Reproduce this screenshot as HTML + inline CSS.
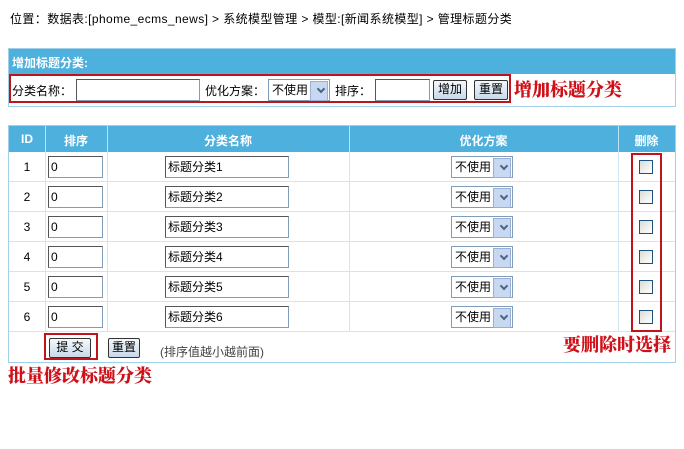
<!DOCTYPE html><html><head><meta charset="utf-8"><style>
*{margin:0;padding:0;box-sizing:border-box}
body{width:684px;height:449px;background:#fff;font:12px "Liberation Sans","Noto Sans CJK SC",sans-serif;color:#000;position:relative;overflow:hidden}
.a{position:absolute}
.hd{background:#4eb0dc;color:#fff;font-weight:bold}
.inp{position:absolute;background:#fff;border:1px solid #7f9db9;border-top-color:#555;border-left-color:#555;height:22px;font-size:12px;padding:3px 2px;line-height:14px}
.sel{position:absolute;border:1px solid #7f9db9;background:#fff;height:22px;width:62px;font-size:12px;padding:3px 3px;line-height:14px}
.sel:after{content:"";position:absolute;right:1px;top:1px;width:16px;height:18px;background:#c8d8f0;border:1px solid #98b0d8}
.sel i{position:absolute;right:5px;top:6px;width:6px;height:6px;border-right:2px solid #4d6185;border-bottom:2px solid #4d6185;transform:rotate(45deg);z-index:2}
.btn{position:absolute;height:20px;border:1px solid #333;background:linear-gradient(#f4f8fc,#c8d8e8);font-size:12px;text-align:center;line-height:17px;border-radius:2px}
.cb{position:absolute;width:14px;height:14px;border:1px solid #1c5180;background:linear-gradient(135deg,#dcdcd6,#fff)}
.red{position:absolute;border:2px solid #c0141c}
.rt{position:absolute;color:#d01018;font-weight:900;font-family:"Noto Serif CJK SC",serif;font-size:18px;line-height:20px}
.bd{border:1px solid #9fd0e8}
.line{position:absolute;background:#cfe6f2}
.c{position:absolute;text-align:center}
</style></head><body>
<div class="a" style="left:10px;top:10px;letter-spacing:0.4px">位置：数据表:[phome_ecms_news] &gt; 系统模型管理 &gt; 模型:[新闻系统模型] &gt; 管理标题分类</div>

<div class="a bd" style="left:8px;top:48px;width:668px;height:59px"></div>
<div class="a hd" style="left:9px;top:49px;width:666px;height:25px;padding:5px 3px">增加标题分类:</div>
<div class="a" style="left:12px;top:82px">分类名称：</div>
<div class="inp" style="left:76px;top:79px;width:124px"></div>
<div class="a" style="left:205px;top:82px">优化方案：</div>
<div class="sel" style="left:268px;top:79px">不使用<i></i></div>
<div class="a" style="left:335px;top:82px">排序：</div>
<div class="inp" style="left:375px;top:79px;width:55px"></div>
<div class="btn" style="left:433px;top:80px;width:34px">增加</div>
<div class="btn" style="left:474px;top:80px;width:34px">重置</div>
<div class="red" style="left:9px;top:74px;width:502px;height:29px"></div>
<div class="rt" style="left:514px;top:79px">增加标题分类</div>

<div class="a bd" style="left:8px;top:125px;width:668px;height:238px"></div>
<div class="a hd" style="left:9px;top:126px;width:666px;height:26px"></div>
<div class="a" style="left:45px;top:126px;width:1px;height:26px;background:#bfe2f2"></div>
<div class="a" style="left:107px;top:126px;width:1px;height:26px;background:#bfe2f2"></div>
<div class="a" style="left:349px;top:126px;width:1px;height:26px;background:#bfe2f2"></div>
<div class="a" style="left:618px;top:126px;width:1px;height:26px;background:#bfe2f2"></div>
<div class="c hd" style="left:9px;top:132px;width:36px;background:none">ID</div>
<div class="c hd" style="left:45px;top:132px;width:62px;background:none">排序</div>
<div class="c hd" style="left:107px;top:132px;width:242px;background:none">分类名称</div>
<div class="c hd" style="left:349px;top:132px;width:269px;background:none">优化方案</div>
<div class="c hd" style="left:618px;top:132px;width:57px;background:none">删除</div>

<div id="rows"></div>
<script>
var h='';
for(var i=0;i<6;i++){var y=152+i*30;
h+='<div class="line" style="left:9px;top:'+(y+29)+'px;width:666px;height:1px"></div>';
['45','107','349','618'].forEach(function(x){h+='<div class="line" style="left:'+x+'px;top:'+y+'px;width:1px;height:30px"></div>'});
h+='<div class="c" style="left:9px;top:'+(y+8)+'px;width:36px">'+(i+1)+'</div>';
h+='<div class="inp" style="left:48px;top:'+(y+4)+'px;width:55px">0</div>';
h+='<div class="inp" style="left:165px;top:'+(y+4)+'px;width:124px">标题分类'+(i+1)+'</div>';
h+='<div class="sel" style="left:451px;top:'+(y+4)+'px">不使用<i></i></div>';
h+='<div class="cb" style="left:639px;top:'+(y+8)+'px"></div>';}
document.getElementById('rows').innerHTML=h;
</script>
<div class="btn" style="left:49px;top:338px;width:42px">提 交</div>
<div class="btn" style="left:108px;top:338px;width:32px">重置</div>
<div class="a" style="left:160px;top:343px;color:#444">(排序值越小越前面)</div>
<div class="red" style="left:44px;top:333px;width:54px;height:27px"></div>
<div class="red" style="left:631px;top:153px;width:31px;height:179px"></div>
<div class="rt" style="left:563px;top:334px">要删除时选择</div>
<div class="rt" style="left:8px;top:365px">批量修改标题分类</div>
</body></html>
